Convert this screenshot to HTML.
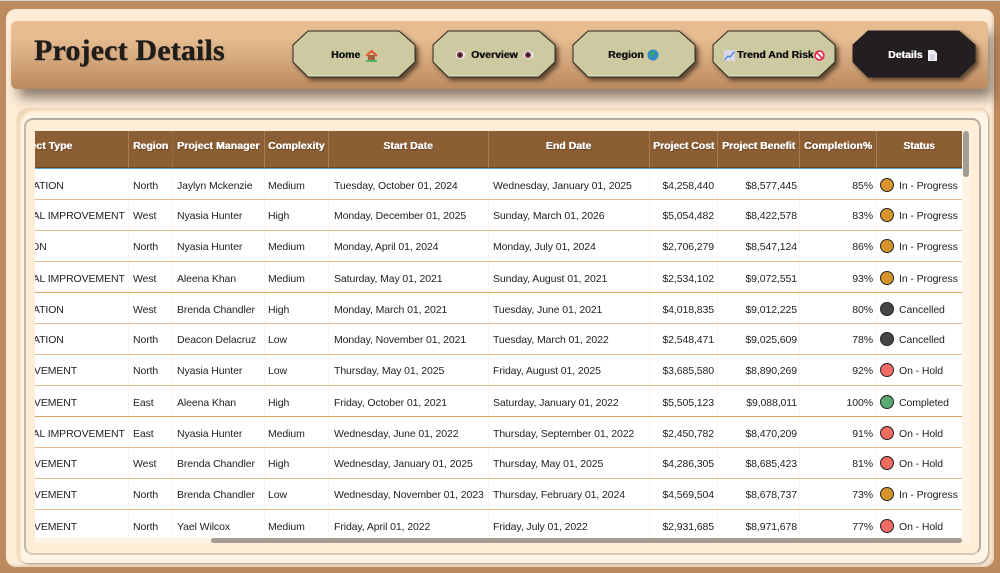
<!DOCTYPE html>
<html><head><meta charset="utf-8"><style>
html,body{margin:0;padding:0;width:1000px;height:573px;overflow:hidden;background:#bc8a5f;font-family:"Liberation Sans",sans-serif}
div,span,svg{position:absolute;box-sizing:border-box}
#top{left:0;top:0;width:1000px;height:1px;background:#d8d4d0}
#panel{left:6px;top:9px;width:988px;height:558px;background:#ffedd8;border-radius:10px;box-shadow:inset -2px -2px 2px #e6d2ba}
#head{left:11px;top:21px;width:977px;height:68px;border-radius:6px;background:linear-gradient(#e7bc91 0,#e7bc91 25%,#bc8a5f 100%);box-shadow:6px 10px 12px -1px rgba(80,68,55,.65)}
#title{left:34px;top:34px;font:bold 30px/34px "Liberation Serif",serif;color:#1f1c1a;letter-spacing:.15px;-webkit-text-stroke:.3px #1f1c1a;text-shadow:1px 1px 1px rgba(0,0,0,.12);white-space:nowrap}
.b{top:29px;width:128px;height:52px;overflow:visible;filter:drop-shadow(3px 3px 2.5px rgba(55,40,25,.75))}
.bt{top:49px;height:13px;font:bold 10.5px/13px "Liberation Sans",sans-serif;color:#111;white-space:nowrap;text-shadow:.4px 0 0 #111}
#c1{left:17px;top:108px;width:971px;height:455px;background:#fff3e4;border-radius:11px;box-shadow:1px 1px 2px #a09484,inset 6px 6px 3px -3px #f0d6b4}
#c2{left:24px;top:118px;width:957px;height:437px;background:#ffedd8;border-radius:9px;border:2px solid #d9c9b4;border-top-color:#b3aca2;border-left-color:#c2b7a8;border-right-color:#b8ad9e;box-shadow:1px 1px 0 #fff6ea}
#tb{left:35px;top:131px;width:935px;height:412px;background:#fff3e6;overflow:hidden}
#th{left:0;top:0;width:927px;height:37px;background:#8b5e34;border-bottom:1px solid #6f4518}
#bl{left:0;top:37px;width:927px;height:1px;background:#5ba0e0}
#body{left:0;top:38px;width:927px;height:369px;background:#fff;overflow:hidden}
.v{top:0;width:1px;height:37px;background:#a67c52}
.bv{top:0;width:1px;height:369px;background:#fff5ea}
.h{top:8px;height:14px;font:bold 10.5px/14px "Liberation Sans",sans-serif;color:#fff;white-space:nowrap;text-align:center;text-shadow:.4px 0 0 #fff,1px 1px 1px rgba(60,30,0,.45)}
.l{left:0;width:927px;height:1px;background:#e7bc91}
.l.d{background:#dda15e}
.r{left:0;width:927px;height:14px;font:10.5px/14px "Liberation Sans",sans-serif;color:#222;white-space:nowrap;letter-spacing:-.1px}
.r span{top:1px}
.a{left:-34px}.a2{left:-32px}.a3{left:-35px}.b2{left:98px}.c{left:142px}.d2{left:233px}.e{left:299px}.f{left:458px}
.g{left:589px;width:90px;text-align:right}.i{left:672px;width:90px;text-align:right}.j{left:760px;width:78px;text-align:right}
.s{left:864px}
.r span.dot{left:845px;top:0;width:14px;height:14px;border-radius:50%;border:1px solid}
.am{background:#d8942c;border-color:#a8701a}.rd{background:#f36b62;border-color:#b41c1c}.gr{background:#5aa972;border-color:#1f6b3c}.dk{background:#454545;border-color:#222}
#sv{left:928px;top:0;width:6px;height:46px;background:#a59d92;border-radius:3px}
#sh{left:176px;top:407px;width:751px;height:5px;background:#a59d92;border-radius:3px}
</style></head><body>
<div id="top"></div>
<div id="panel"></div>
<div id="head"></div>
<div id="title">Project Details</div>

<svg class="b" style="left:291px" viewBox="0 0 128 52"><polygon points="17,2 2,16 2,33 17,48 108,48 124,33 124,16 108,2" fill="#cdc9a0" stroke="#2a2820" stroke-width="1"/><path d="M18 47H107" stroke="#e9e7c8" stroke-width="1"/></svg>
<div class="bt" style="left:331px">Home</div>
<svg style="left:365px;top:49px;width:13px;height:13px" viewBox="0 0 13 13"><path d="M1 7 6.5 2 12 7" fill="none" stroke="#e2542a" stroke-width="2"/><rect x="3" y="6" width="7" height="5" fill="#a5603c"/><path d="M1 12h11" stroke="#2cae5a" stroke-width="1.6"/></svg>

<svg class="b" style="left:431px" viewBox="0 0 128 52"><polygon points="17,2 2,16 2,33 17,48 108,48 124,33 124,16 108,2" fill="#cdc9a0" stroke="#2a2820" stroke-width="1"/><path d="M18 47H107" stroke="#e9e7c8" stroke-width="1"/></svg>
<div class="bt" style="left:471px">Overview</div>
<svg style="left:455px;top:50px;width:11px;height:10px" viewBox="0 0 11 10"><ellipse cx="5.5" cy="5" rx="5" ry="4" fill="#e8e4f0"/><circle cx="5" cy="5" r="3" fill="#7a2e3c"/><circle cx="5" cy="5" r="1.2" fill="#1c1414"/></svg>
<svg style="left:523px;top:50px;width:11px;height:10px" viewBox="0 0 11 10"><ellipse cx="5.5" cy="5" rx="5" ry="4" fill="#e8e4f0"/><circle cx="5" cy="5" r="3" fill="#7a2e3c"/><circle cx="5" cy="5" r="1.2" fill="#1c1414"/></svg>

<svg class="b" style="left:571px" viewBox="0 0 128 52"><polygon points="17,2 2,16 2,33 17,48 108,48 124,33 124,16 108,2" fill="#cdc9a0" stroke="#2a2820" stroke-width="1"/><path d="M18 47H107" stroke="#e9e7c8" stroke-width="1"/></svg>
<div class="bt" style="left:608px">Region</div>
<svg style="left:647px;top:49px;width:12px;height:12px" viewBox="0 0 12 12"><circle cx="6" cy="6" r="5.5" fill="#2f86d6"/><path d="M3 3 7 2 8 5 5 7 6 10 3 8Z" fill="#3aa85e"/><path d="M9 6 11 6 10 9Z" fill="#3aa85e"/></svg>

<svg class="b" style="left:711px" viewBox="0 0 128 52"><polygon points="17,2 2,16 2,33 17,48 108,48 124,33 124,16 108,2" fill="#cdc9a0" stroke="#2a2820" stroke-width="1"/><path d="M18 47H107" stroke="#e9e7c8" stroke-width="1"/></svg>
<svg style="left:724px;top:50px;width:11px;height:11px" viewBox="0 0 11 11"><rect width="11" height="11" fill="#dcd6ea"/><path d="M.5 10 4 6 6 7 10.5 1.5" fill="none" stroke="#2f7ee0" stroke-width="1.2"/></svg>
<div class="bt" style="left:737px">Trend And Risk</div>
<svg style="left:814px;top:50px;width:11px;height:11px" viewBox="0 0 11 11"><circle cx="5.5" cy="5.5" r="4.4" fill="#fff" stroke="#e8224c" stroke-width="1.6"/><path d="M2.4 2.4 8.6 8.6" stroke="#e8224c" stroke-width="1.6"/></svg>

<svg class="b" style="left:851px" viewBox="0 0 128 52"><polygon points="17,2 2,16 2,33 17,48 108,48 124,33 124,16 108,2" fill="#231f20" stroke="#231f20" stroke-width="1"/></svg>
<div class="bt" style="left:888px;color:#fff;text-shadow:.4px 0 0 #fff">Details</div>
<svg style="left:928px;top:50px;width:9px;height:11px" viewBox="0 0 9 11"><path d="M0 0H6L9 3V11H0Z" fill="#f2f0f6"/><path d="M2 5H7M2 7H7M2 9H7" stroke="#a8a4c0" stroke-width=".8"/></svg>

<div id="c1"></div>
<div id="c2"></div>

<div id="tb">
<div id="th">
<span class="v" style="left:93px"></span><span class="v" style="left:137px;background:#966c42"></span><span class="v" style="left:229px"></span><span class="v" style="left:293px"></span><span class="v" style="left:453px"></span><span class="v" style="left:614px"></span><span class="v" style="left:682px"></span><span class="v" style="left:764px"></span><span class="v" style="left:841px"></span>
<span class="h" style="left:-25px">Project Type</span>
<span class="h" style="left:98px;letter-spacing:-.1px">Region</span>
<span class="h" style="left:142px;letter-spacing:.05px">Project Manager</span>
<span class="h" style="left:233px">Complexity</span>
<span class="h" style="left:293px;width:160px">Start Date</span>
<span class="h" style="left:453px;width:161px">End Date</span>
<span class="h" style="left:618px;letter-spacing:-.05px">Project Cost</span>
<span class="h" style="left:687px;letter-spacing:-.07px">Project Benefit</span>
<span class="h" style="left:769px;letter-spacing:.1px">Completion%</span>
<span class="h" style="left:841px;width:86px;letter-spacing:-.1px">Status</span>
</div>
<div id="bl"></div>
<div id="body">
<span class="bv" style="left:93px"></span><span class="bv" style="left:137px"></span><span class="bv" style="left:229px"></span><span class="bv" style="left:293px"></span><span class="bv" style="left:453px"></span><span class="bv" style="left:614px"></span><span class="bv" style="left:682px"></span><span class="bv" style="left:764px"></span><span class="bv" style="left:841px"></span>
<div class="l" style="top:30px"></div><div class="l" style="top:61px"></div><div class="l" style="top:92px"></div><div class="l d" style="top:123px"></div><div class="l" style="top:154px"></div><div class="l" style="top:185px"></div><div class="l" style="top:216px"></div><div class="l d" style="top:247px"></div><div class="l" style="top:278px"></div><div class="l" style="top:309px"></div><div class="l" style="top:340px"></div>

<div class="r" style="top:9px"><span class="a">INNOVATION</span><span class="b2">North</span><span class="c">Jaylyn Mckenzie</span><span class="d2">Medium</span><span class="e">Tuesday, October 01, 2024</span><span class="f">Wednesday, January 01, 2025</span><span class="g">$4,258,440</span><span class="i">$8,577,445</span><span class="j">85%</span><span class="dot am"></span><span class="s">In - Progress</span></div>
<div class="r" style="top:39px"><span class="a2">CAPITAL IMPROVEMENT</span><span class="b2">West</span><span class="c">Nyasia Hunter</span><span class="d2">High</span><span class="e">Monday, December 01, 2025</span><span class="f">Sunday, March 01, 2026</span><span class="g">$5,054,482</span><span class="i">$8,422,578</span><span class="j">83%</span><span class="dot am"></span><span class="s">In - Progress</span></div>
<div class="r" style="top:70px"><span style="left:-48px">EXPANSION</span><span class="b2">North</span><span class="c">Nyasia Hunter</span><span class="d2">Medium</span><span class="e">Monday, April 01, 2024</span><span class="f">Monday, July 01, 2024</span><span class="g">$2,706,279</span><span class="i">$8,547,124</span><span class="j">86%</span><span class="dot am"></span><span class="s">In - Progress</span></div>
<div class="r" style="top:102px"><span class="a2">CAPITAL IMPROVEMENT</span><span class="b2">West</span><span class="c">Aleena Khan</span><span class="d2">Medium</span><span class="e">Saturday, May 01, 2021</span><span class="f">Sunday, August 01, 2021</span><span class="g">$2,534,102</span><span class="i">$9,072,551</span><span class="j">93%</span><span class="dot am"></span><span class="s">In - Progress</span></div>
<div class="r" style="top:133px"><span class="a">INNOVATION</span><span class="b2">West</span><span class="c">Brenda Chandler</span><span class="d2">High</span><span class="e">Monday, March 01, 2021</span><span class="f">Tuesday, June 01, 2021</span><span class="g">$4,018,835</span><span class="i">$9,012,225</span><span class="j">80%</span><span class="dot dk"></span><span class="s">Cancelled</span></div>
<div class="r" style="top:163px"><span class="a">INNOVATION</span><span class="b2">North</span><span class="c">Deacon Delacruz</span><span class="d2">Low</span><span class="e">Monday, November 01, 2021</span><span class="f">Tuesday, March 01, 2022</span><span class="g">$2,548,471</span><span class="i">$9,025,609</span><span class="j">78%</span><span class="dot dk"></span><span class="s">Cancelled</span></div>
<div class="r" style="top:194px"><span class="a3">IMPROVEMENT</span><span class="b2">North</span><span class="c">Nyasia Hunter</span><span class="d2">Low</span><span class="e">Thursday, May 01, 2025</span><span class="f">Friday, August 01, 2025</span><span class="g">$3,685,580</span><span class="i">$8,890,269</span><span class="j">92%</span><span class="dot rd"></span><span class="s">On - Hold</span></div>
<div class="r" style="top:226px"><span class="a3">IMPROVEMENT</span><span class="b2">East</span><span class="c">Aleena Khan</span><span class="d2">High</span><span class="e">Friday, October 01, 2021</span><span class="f">Saturday, January 01, 2022</span><span class="g">$5,505,123</span><span class="i">$9,088,011</span><span class="j">100%</span><span class="dot gr"></span><span class="s">Completed</span></div>
<div class="r" style="top:257px"><span class="a2">CAPITAL IMPROVEMENT</span><span class="b2">East</span><span class="c">Nyasia Hunter</span><span class="d2">Medium</span><span class="e">Wednesday, June 01, 2022</span><span class="f">Thursday, September 01, 2022</span><span class="g">$2,450,782</span><span class="i">$8,470,209</span><span class="j">91%</span><span class="dot rd"></span><span class="s">On - Hold</span></div>
<div class="r" style="top:287px"><span class="a3">IMPROVEMENT</span><span class="b2">West</span><span class="c">Brenda Chandler</span><span class="d2">High</span><span class="e">Wednesday, January 01, 2025</span><span class="f">Thursday, May 01, 2025</span><span class="g">$4,286,305</span><span class="i">$8,685,423</span><span class="j">81%</span><span class="dot rd"></span><span class="s">On - Hold</span></div>
<div class="r" style="top:318px"><span class="a3">IMPROVEMENT</span><span class="b2">North</span><span class="c">Brenda Chandler</span><span class="d2">Low</span><span class="e">Wednesday, November 01, 2023</span><span class="f">Thursday, February 01, 2024</span><span class="g">$4,569,504</span><span class="i">$8,678,737</span><span class="j">73%</span><span class="dot am"></span><span class="s">In - Progress</span></div>
<div class="r" style="top:350px"><span class="a3">IMPROVEMENT</span><span class="b2">North</span><span class="c">Yael Wilcox</span><span class="d2">Medium</span><span class="e">Friday, April 01, 2022</span><span class="f">Friday, July 01, 2022</span><span class="g">$2,931,685</span><span class="i">$8,971,678</span><span class="j">77%</span><span class="dot rd"></span><span class="s">On - Hold</span></div>
</div>
<div id="sv"></div>
<div id="sh"></div>
</div>
</body></html>
